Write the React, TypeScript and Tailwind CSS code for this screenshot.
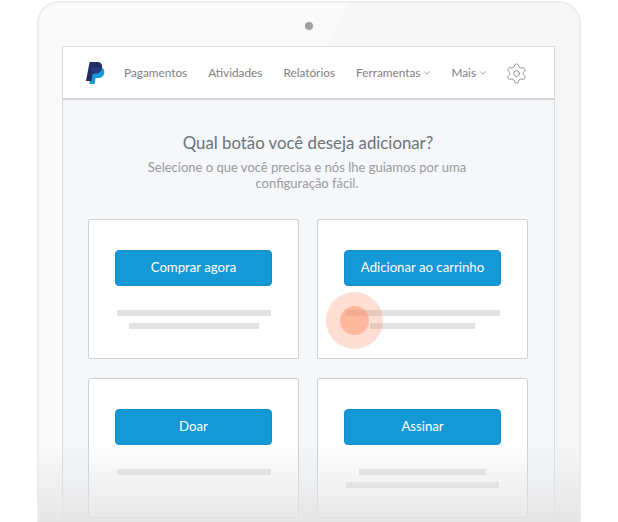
import { ChevronDown, Settings } from "lucide-react";

const navItems = [
  { label: "Pagamentos" },
  { label: "Atividades" },
  { label: "Relatórios" },
  { label: "Ferramentas", menu: true },
  { label: "Mais", menu: true },
];

const cards = [
  { label: "Comprar agora", lines: ["w-[154px]", "w-[130px]"] },
  { label: "Adicionar ao carrinho", lines: ["w-[154px]", "w-[105px]"], tap: true },
  { label: "Doar", lines: ["w-[154px]"] },
  { label: "Assinar", lines: ["w-[127px]", "w-[153px]"] },
];

function PayPalLogo() {
  return (
    <svg width="20" height="22" viewBox="0 0 20 22" className="shrink-0">
      <path
        d="M5.2 5.5h7.6c3 0 6 1.2 5.6 5-.5 3.6-3 5.6-6.6 5.6H9.6L8.6 22H3.4z"
        fill="#179bd7"
      />
      <path
        d="M3.6 0h7.2c3.4 0 5.8 1.6 5.2 5.4-.6 4-3.4 6.2-7.2 6.2H6.6L5.4 19H0z"
        fill="#222d65"
      />
      <path
        d="M5.2 5.5h10.8c-.6 4-3.4 6.1-7.2 6.1H6.6L5.4 17z"
        fill="#253b80"
      />
    </svg>
  );
}

function Card({ label, lines, tap }: { label: string; lines: string[]; tap?: boolean }) {
  return (
    <div className="relative h-[140px] rounded-[2px] border border-[#cfcfcf] bg-white pt-[30px]">
      <div className="mx-auto flex h-[36px] w-[157px] items-center justify-center rounded-[4px] border border-[#1390cc] bg-[#1598d6] text-[13.2px] text-white">
        {label}
      </div>
      <div className="mt-[24px] flex flex-col items-center gap-[7px]">
        {lines.map((w, i) => (
          <div key={i} className={`h-[6px] bg-[#e2e2e2] ${w}`} />
        ))}
      </div>
      {tap && (
        <div className="absolute left-[8px] top-[72px] flex h-[57px] w-[57px] items-center justify-center rounded-full bg-[#ff7f50]/25">
          <div className="h-[29px] w-[29px] rounded-full bg-[#ff8a5c]/45" />
        </div>
      )}
    </div>
  );
}

export default function App() {
  return (
    <div className="h-[522px] w-[618px] overflow-hidden bg-white font-['Lato','Liberation_Sans',sans-serif]">
      <div className="relative ml-[37px] mt-px h-[540px] w-[544px] rounded-t-[22px] border-2 border-b-0 border-[#ececec] bg-[linear-gradient(117deg,#fafafa_38%,#f6f6f6_38%)] pl-[23px] pr-[24px]">
        <div className="flex h-[43px] items-center justify-center pt-[2px]">
          <div className="h-[8px] w-[8px] rounded-full bg-[#a0a0a0]" />
        </div>

        <div className="h-[500px] border border-[#dcdcdc] bg-[#f5f7fa]">
          <nav className="flex h-[53px] items-center border-b-2 border-[#d4d4d4] bg-white pl-[23px] text-[11.8px] text-[#808080]">
            <PayPalLogo />
            <div className="ml-[18px] mt-px flex items-center gap-[21px]">
              {navItems.map((item) => (
                <span key={item.label} className="flex items-center gap-[2px]">
                  {item.label}
                  {item.menu && <ChevronDown size={10} strokeWidth={1.8} className="-mr-[2px]" />}
                </span>
              ))}
            </div>
            <Settings size={23} strokeWidth={0.9} className="ml-[19px] mt-px text-[#808080]" />
          </nav>

          <div className="ml-[25px] w-[440px] pt-[32px]">
            <h1 className="text-center text-[16.8px] leading-[22px] text-[#6c7378]">
              Qual botão você deseja adicionar?
            </h1>
            <p className="ml-[49px] mt-[5px] w-[340px] text-center text-[13px] leading-[16px] text-[#9a9a9a]">
              Selecione o que você precisa e nós lhe guiamos por uma configuração fácil.
            </p>
            <div className="mt-[28px] grid grid-cols-[211px_211px] gap-x-[18px] gap-y-[19px]">
              {cards.map((card) => (
                <Card key={card.label} {...card} />
              ))}
            </div>
          </div>
        </div>

        <div className="absolute inset-x-0 top-[440px] h-[82px] bg-gradient-to-b from-transparent to-[#e3e3e3]/90" />
      </div>
    </div>
  );
}
